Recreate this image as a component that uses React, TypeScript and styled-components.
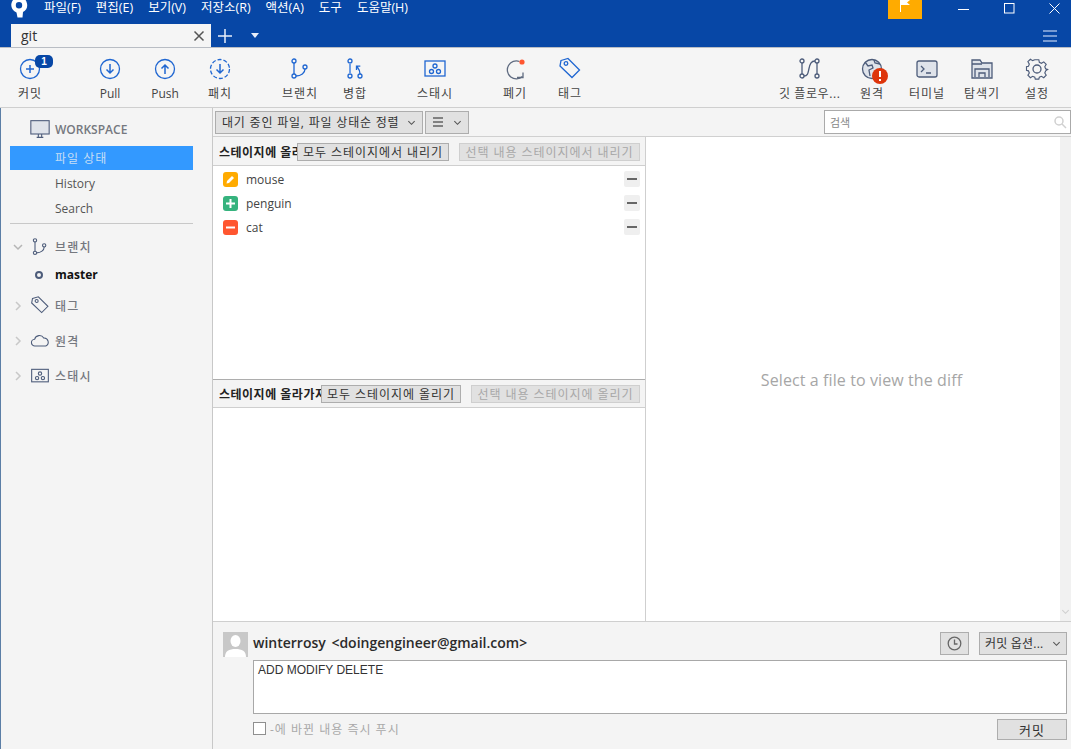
import React from "react";
import styled, { createGlobalStyle } from "styled-components";

const FONT = `"Open Sans", "Noto Sans CJK KR", "Noto Sans", sans-serif`;
const BLUE = "#1f66d1";
const SLATE = "#4d5c7a";

const Global = createGlobalStyle`
  html, body { margin: 0; padding: 0; height: 100%; overflow: hidden; background: #f4f4f4; }
  * { box-sizing: border-box; }
  #root { height: 100%; }
`;

const Page = styled.div`
  width: 1071px; height: 749px; display: flex; flex-direction: column;
  font-family: ${FONT}; font-size: 12px; color: #333; background: #f4f4f4; overflow: hidden;
`;
const TitleBar = styled.div`
  height: 24px; background: #0747a6; display: flex; align-items: flex-start; color: #fff;
`;
const Logo = styled.svg`width: 18px; height: 18px; margin-left: 10px; flex: none;`;
const Menu = styled.div`display: flex; gap: 15px; margin-left: 16px; height: 16px; align-items: center;`;
const MenuItem = styled.span`font-size: 12.5px; line-height: 16px; color: #fff; white-space: nowrap;`;
const Spacer = styled.div`flex: 1;`;
const Flag = styled.div`
  width: 34px; height: 19px; background: #ffab00; display: flex; justify-content: center; margin-right: 36px;
`;
const WinControls = styled.div`display: flex; gap: 34.5px; padding-right: 11px; height: 16px; align-items: center;`;
const TabRow = styled.div`
  height: 23px; background: #0747a6; display: flex; align-items: stretch; padding-left: 11px;
`;
const Tab = styled.div`
  width: 200px; background: #f5f5f5; display: flex; align-items: center; justify-content: space-between;
  padding: 0 6px 0 10px; font-size: 14px; color: #333;
`;
const TabAction = styled.div<{ $ml?: number; $mr?: number }>`
  width: 28px; display: flex; align-items: center; justify-content: center;
  margin-left: ${p => p.$ml ?? 0}px; margin-right: ${p => p.$mr ?? 0}px;
`;
const Toolbar = styled.div`
  height: 61px; background: #f5f5f5; border-top: 1px solid #b9bdc4; border-bottom: 1px solid #cfcfcf;
  display: flex; padding-left: 2.5px; padding-right: 6.5px;
`;
const ToolGroup = styled.div<{ $gap?: number }>`display: flex; margin-right: ${p => p.$gap ?? 25}px;`;
const ToolItem = styled.div<{ $w?: number }>`
  width: ${p => p.$w ?? 55}px; height: 59px; display: flex; flex-direction: column; align-items: center;
  position: relative; padding-top: 9px;
`;
const ToolIcon = styled.div`height: 24px; width: 24px; position: relative;`;
const ToolLabel = styled.div<{ $sp?: number }>`
  font-size: 12px; line-height: 16px; margin-top: 5px; color: #444; white-space: nowrap;
  letter-spacing: ${p => p.$sp ?? 1}px;
`;
const Badge = styled.span`
  position: absolute; left: 17px; top: -2px; width: 18px; height: 13px; background: #0747a6; border-radius: 5px;
  color: #fff; font-size: 10px; font-weight: 700; line-height: 13px; text-align: center; font-family: "Liberation Sans", sans-serif;
`;
const AlertDot = styled.svg`position: absolute; left: 12px; top: 11px; width: 16px; height: 16px;`;
const Body = styled.div`flex: 1; display: flex; min-height: 0;`;
const Sidebar = styled.aside`
  width: 213px; flex: none; border-left: 1px solid #5b7ea6; border-right: 1px solid #c8c8c8; background: #f4f4f4;
  padding: 11px 19px 0 9px; display: flex; flex-direction: column;
`;
const SideHead = styled.div<{ $h?: number }>`
  height: ${p => p.$h ?? 35}px; display: flex; align-items: center; color: #75787f; font-size: 12px; font-weight: 500;
  letter-spacing: 1.2px; flex: none;
`;
const WorkspaceHead = styled(SideHead)`letter-spacing: 0; font-weight: 600; padding-left: 20px;`;
const SideIconSlot = styled.div`width: 20px; margin: 0 5px 0 7px; display: flex; justify-content: center; flex: none;`;
const WorkspaceIcon = styled(SideIconSlot)`margin-left: 0;`;
const Chevron = styled.svg`width: 10px; height: 10px; flex: none; margin-left: 3px;`;
const SelectedRow = styled.div`
  height: 24px; margin: 7px 0 1px; background: #3399ff; color: #c7def5; padding-left: 45px; display: flex; align-items: center; flex: none; letter-spacing: 1px;
`;
const SideRow = styled.div<{ $bold?: boolean }>`
  height: 25px; padding-left: 45px; display: flex; align-items: center; flex: none; color: ${p => p.$bold ? "#111" : "#555"};
  font-weight: ${p => p.$bold ? 700 : 400};
`;
const MasterRow = styled(SideRow)`height: 21px; margin-bottom: 3px;`;
const SideDivider = styled.div`height: 1px; background: #c8c8c8; margin: 2px 0 5px; flex: none;`;
const MasterDot = styled.span`
  width: 8px; height: 8px; border: 2px solid ${SLATE}; border-radius: 50%; margin-left: -20px; margin-right: 12px;
`;
const Main = styled.main`flex: 1; min-width: 0; display: flex; flex-direction: column;`;
const FilterBar = styled.div`
  height: 29px; display: flex; align-items: center; padding-left: 2px; padding-right: 0; gap: 2px; flex: none;
  border-bottom: 1px solid #d0d0d0; background: #f4f4f4;
`;
const Select = styled.div<{ $w: number }>`
  width: ${p => p.$w}px; height: 23px; background: #e1e1e1; border: 1px solid #adadad; display: flex; align-items: center;
  justify-content: space-between; padding: 0 6px; font-size: 12px; letter-spacing: .8px; color: #333; white-space: nowrap; flex: none; overflow: hidden;
`;
const SearchBox = styled.div`
  width: 247px; height: 24px; margin-left: auto; background: #fff; border: 1px solid #aaa; display: flex; align-items: center;
  justify-content: space-between; padding: 0 3px 0 5px; color: #888; font-size: 11px;
`;
const Panes = styled.div`flex: 1; display: flex; min-height: 0;`;
const LeftPane = styled.div`width: 433px; flex: none; display: flex; flex-direction: column; border-right: 1px solid #cfcfcf;`;
const DiffPane = styled.div`flex: 1; background: #fff; display: flex; min-width: 0;`;
const DiffMsg = styled.div`
  flex: 1; display: flex; align-items: center; justify-content: center; color: #a6a6a6; font-size: 16px; letter-spacing: .1px; padding: 2px 0 0 17px;
`;
const Scroll = styled.div`
  width: 11px; background: #f1f1f1; display: flex; align-items: flex-end; justify-content: center; padding-bottom: 5px;
`;
const StageHead = styled.div<{ $top?: boolean }>`
  height: 29px; flex: none; background: #f4f4f4; border-bottom: 1px solid #cfcfcf;
  ${p => p.$top ? "border-top: 1px solid #adadad;" : ""}
  display: flex; align-items: center; padding: 1px 5px 0 6px; position: relative;
`;
const StageLabel = styled.div<{ $w: number }>`
  width: ${p => p.$w}px; flex: none; overflow: hidden; white-space: nowrap; font-weight: 700; font-size: 12px; color: #222; letter-spacing: .5px;
`;
const StageBtn = styled.div<{ $w: number; $off?: boolean }>`
  width: ${p => p.$w}px; height: 18px; flex: none; border: 1px solid ${p => p.$off ? "#cfcfcf" : "#adadad"}; background: #e1e1e1;
  color: ${p => p.$off ? "#a8a8a8" : "#333"}; display: flex; align-items: center; justify-content: center; white-space: nowrap;
  font-size: 12px; letter-spacing: .95px; margin-right: 10px; overflow: hidden; &:last-child { margin-right: 0; }
`;
const FileList = styled.div`flex: 1; background: #fff; padding-top: 1px; min-height: 0;`;
const FileRow = styled.div`height: 24px; display: flex; align-items: center; padding: 0 5px 0 10px;`;
const FileBadge = styled.div<{ $c: string }>`
  width: 15px; height: 15px; border-radius: 3px; background: ${p => p.$c}; display: flex; align-items: center; justify-content: center; flex: none;
`;
const FileName = styled.span`margin-left: 8px; flex: 1; color: #444;`;
const Unstage = styled.div`
  width: 16px; height: 16px; background: #efefef; border-radius: 2px; display: flex; align-items: center; justify-content: center;
  &::after { content: ""; width: 10px; height: 2px; background: #666; }
`;
const CommitArea = styled.div`
  height: 128px; flex: none; border-top: 1px solid #cfcfcf; background: #f4f4f4; padding: 10px 4px 0 10px; display: flex; flex-direction: column;
`;
const CommitTop = styled.div`height: 25px; display: flex; align-items: center; flex: none;`;
const Avatar = styled.svg`width: 25px; height: 25px; flex: none; margin-right: 5px;`;
const Author = styled.div`font-size: 14px; font-weight: 600; color: #2b2b2b; flex: 1; white-space: nowrap; margin-top: -4px; word-spacing: 2px;`;
const ClockBtn = styled.div`
  width: 29px; height: 23px; background: #e1e1e1; border: 1px solid #adadad; display: flex; align-items: center; justify-content: center; margin: -3px 10px 0 0;
`;
const OptBtn = styled(Select)`margin-top: -3px; padding: 0 5px; letter-spacing: .2px;`;
const Message = styled.div`
  height: 54px; margin: 3px 0 0 30px; background: #fff; border: 1px solid #a8a8a8; padding: 2px 4px;
  font-family: "Liberation Sans", sans-serif; font-size: 12px; color: #333; flex: none;
`;
const CommitBottom = styled.div`display: flex; align-items: center; justify-content: space-between; margin: 5px 0 0 30px; height: 21px;`;
const Check = styled.label`display: flex; align-items: center; color: #a9a9a9; font-size: 12px; letter-spacing: 1px; gap: 4px; margin-top: -2px;`;
const CheckBox = styled.span`width: 13px; height: 13px; background: #fff; border: 1px solid #8f8f8f; display: inline-block;`;
const CommitBtn = styled.div`
  width: 70px; height: 21px; background: #e1e1e1; border: 1px solid #adadad; display: flex; align-items: center; justify-content: center; font-size: 13px; letter-spacing: 1px; color: #333;
`;
const IconSvg = styled.svg`display: block;`;

const Ic: React.FC<{ c?: string; s?: number; children: React.ReactNode }> = ({ c = BLUE, s = 24, children }) => (
  <IconSvg width={s} height={s} viewBox="0 0 24 24" fill="none" stroke={c} strokeWidth={1.3}>{children}</IconSvg>
);
const BranchPaths = () => (<><circle cx="6" cy="4" r="2" /><circle cx="6" cy="19" r="2" /><circle cx="17" cy="10" r="2" /><path d="M6 6v11M8 19c5 0 9-3 9-7" /></>);
const TagPaths = () => (<><path d="M3 3.500 10 1.500l11.500 11.500-7.500 7.500L2 9z" /><circle cx="8" cy="6.500" r="1.800" /></>);
const StashPaths = () => (<><rect x="2" y="4" width="20" height="15" /><circle cx="12" cy="9" r="2" /><circle cx="8.500" cy="14.500" r="2" /><circle cx="15.500" cy="14.500" r="2" /></>);
const ChevD = ({ c = "#555", s = 9 }) => (<svg width={s} height={s} viewBox="0 0 10 10" fill="none" stroke={c} strokeWidth={1.2}><path d="M1.500 3.500 5 7l3.500-3.500" /></svg>);
const ChevR = () => (<Chevron viewBox="0 0 10 10" fill="none" stroke="#c8c8c8" strokeWidth="1.500"><path d="M3 1l4 4-4 4" /></Chevron>);

const Arrow = ({ up }: { up?: boolean }) => up
  ? <path d="M12 17V8M8.500 11.500 12 8l3.500 3.500" strokeWidth={1.5} />
  : <path d="M12 7v9M8.500 12.500 12 16l3.500-3.500" strokeWidth={1.5} />;

export default function App() {
  return (
    <Page>
      <Global />
      <TitleBar>
        <Logo viewBox="0 0 18 18">
          <path fill="#fff" fillRule="evenodd" d="M9-3a8 8 0 0 1 4 15l-.5 5.500h-5l-1-5A8 8 0 0 1 9-3zm0 5a3.200 3.200 0 1 0 0 6.400 3.200 3.200 0 0 0 0-6.400z" />
        </Logo>
        <Menu>
          {["파일(F)", "편집(E)", "보기(V)", "저장소(R)", "액션(A)", "도구", "도움말(H)"].map(m => <MenuItem key={m}>{m}</MenuItem>)}
        </Menu>
        <Spacer />
        <Flag>
          <svg width="12" height="12" viewBox="0 0 12 12"><path d="M1.500 0v12" stroke="#fff" strokeWidth="1" /><path d="M2 0h9L8 2.500 11 5H2z" fill="#fff" /></svg>
        </Flag>
        <WinControls>
          <svg width="11" height="11"><path d="M0 6.500h11" stroke="#fff" /></svg>
          <svg width="11" height="11"><rect x=".5" y=".5" width="9.500" height="9.500" fill="none" stroke="#fff" /></svg>
          <svg width="11" height="11"><path d="M.5.500l10 10M10.500.500l-10 10" stroke="#fff" /></svg>
        </WinControls>
      </TitleBar>
      <TabRow>
        <Tab>
          git
          <svg width="12" height="12"><path d="M1.500 1.500l9 9M10.500 1.500l-9 9" stroke="#555" strokeWidth="1.500" /></svg>
        </Tab>
        <TabAction><svg width="14" height="14"><path d="M7 0v14M0 7h14" stroke="#e8eefa" strokeWidth="1.500" /></svg></TabAction>
        <TabAction $ml={2}><svg width="8" height="5"><path d="M0 0h8L4 5z" fill="#e8eefa" /></svg></TabAction>
        <Spacer />
        <TabAction $mr={7}><svg width="14" height="12"><path d="M0 1h14M0 6h14M0 11h14" stroke="#9db8e2" strokeWidth="1.500" /></svg></TabAction>
      </TabRow>
      <Toolbar>
        <ToolGroup>
          <ToolItem>
            <ToolIcon><Ic><circle cx="12" cy="12" r="9.500" /><path d="M12 8v8M8 12h8" strokeWidth="1.500" /></Ic><Badge>1</Badge></ToolIcon>
            <ToolLabel>커밋</ToolLabel>
          </ToolItem>
        </ToolGroup>
        <ToolGroup>
          <ToolItem><ToolIcon><Ic><circle cx="12" cy="12" r="9.500" /><Arrow /></Ic></ToolIcon><ToolLabel $sp={0}>Pull</ToolLabel></ToolItem>
          <ToolItem><ToolIcon><Ic><circle cx="12" cy="12" r="9.500" /><Arrow up /></Ic></ToolIcon><ToolLabel $sp={0}>Push</ToolLabel></ToolItem>
          <ToolItem><ToolIcon><Ic><circle cx="12" cy="12" r="9.500" strokeDasharray="4 2" /><Arrow /></Ic></ToolIcon><ToolLabel>패치</ToolLabel></ToolItem>
        </ToolGroup>
        <ToolGroup>
          <ToolItem><ToolIcon><Ic><BranchPaths /></Ic></ToolIcon><ToolLabel>브랜치</ToolLabel></ToolItem>
          <ToolItem><ToolIcon><Ic><circle cx="7" cy="4" r="2" /><circle cx="7" cy="19" r="2" /><circle cx="17" cy="19" r="2" /><path d="M7 6v11" stroke="#6f9fe6" strokeWidth="2" /><path d="M17 17c0-3-1-5-3-7.500M13.500 13V9.200h3.800" /></Ic></ToolIcon><ToolLabel>병합</ToolLabel></ToolItem>
        </ToolGroup>
        <ToolGroup>
          <ToolItem><ToolIcon><Ic><StashPaths /></Ic></ToolIcon><ToolLabel>스태시</ToolLabel></ToolItem>
        </ToolGroup>
        <ToolGroup>
          <ToolItem>
            <ToolIcon>
              <Ic c="#5f6b80"><path d="M16.500 4.500A9 9 0 1 0 19.500 19.500" /><path d="M14 20.500h6v-5" /><circle cx="19" cy="5" r="2.600" fill="#ff5630" stroke="none" /></Ic>
            </ToolIcon>
            <ToolLabel>폐기</ToolLabel>
          </ToolItem>
          <ToolItem><ToolIcon><Ic><TagPaths /></Ic></ToolIcon><ToolLabel>태그</ToolLabel></ToolItem>
        </ToolGroup>
        <Spacer />
        <ToolGroup $gap={0}>
          <ToolItem $w={69.5}>
            <ToolIcon><Ic c={SLATE}><circle cx="4" cy="4" r="2" /><circle cx="4" cy="19" r="2" /><circle cx="19" cy="4" r="2" /><circle cx="19" cy="19" r="2" /><path d="M4 6v11M19 6v11M6 19c4 0 4-3 5-7.500S13 4 17 4" /></Ic></ToolIcon>
            <ToolLabel $sp={0.6}>깃 플로우...</ToolLabel>
          </ToolItem>
          <ToolItem>
            <ToolIcon>
              <Ic c={SLATE}><circle cx="12" cy="12" r="9.500" fill="#dfe3ea" /><path d="M5 5l3 4 4-1 1 3-4 2 1 6M14 3l1 3 5 1M16 13l2 2 3-1" /></Ic>
              <AlertDot viewBox="0 0 16 16"><circle cx="8" cy="8" r="8" fill="#de350b" /><path d="M8 3v6M8 11v2" stroke="#fff" strokeWidth="2" /></AlertDot>
            </ToolIcon>
            <ToolLabel>원격</ToolLabel>
          </ToolItem>
          <ToolItem><ToolIcon><Ic c={SLATE}><rect x="2" y="4" width="20" height="16" rx="2" fill="#dfe3ea" /><path d="M6 9l3 3-3 3M11 16h5" /></Ic></ToolIcon><ToolLabel>터미널</ToolLabel></ToolItem>
          <ToolItem><ToolIcon><Ic c={SLATE}><path d="M2 3h8l2 3h10v15H2z" fill="#dfe3ea" /><path d="M5 20v-8h14v8M9 20v-4h6v4M2 7h10" /></Ic></ToolIcon><ToolLabel>탐색기</ToolLabel></ToolItem>
          <ToolItem><ToolIcon><Ic c={SLATE}><path d="M10 2h4l.6 3 2.400 1 2.600-1.600 2.800 2.800L20.800 10l1 2.400 2.200.6v0l-.000 0-2.200 1.600-1 2.400 1.600 2.600-2.800 2.800L17 20.800l-2.400 1-.6 2.200h-4l-.6-2.200-2.400-1-2.600 1.600-2.800-2.800L3.200 17l-1-2.400L0 14v-4l2.200-.6 1-2.400L1.600 4.200 4.400 1.400 7 3l2.400-1z" transform="translate(1.500 1) scale(.88)" /><circle cx="12" cy="12" r="4" /></Ic></ToolIcon><ToolLabel>설정</ToolLabel></ToolItem>
        </ToolGroup>
      </Toolbar>
      <Body>
        <Sidebar>
          <WorkspaceHead $h={20}>
            <WorkspaceIcon><Ic c={SLATE} s={20}><rect x="1" y="2" width="22" height="16" fill="#dfe3ea" /><path d="M8 22h8M10 18v4M14 18v4" /></Ic></WorkspaceIcon>
            WORKSPACE
          </WorkspaceHead>
          <SelectedRow>파일 상태</SelectedRow>
          <SideRow>History</SideRow>
          <SideRow>Search</SideRow>
          <SideDivider />
          <SideHead>
            <Chevron viewBox="0 0 10 10" fill="none" stroke="#b5b5b5" strokeWidth="1.500"><path d="M1 3l4 4 4-4" /></Chevron>
            <SideIconSlot><Ic c={SLATE} s={20}><BranchPaths /></Ic></SideIconSlot>
            브랜치
          </SideHead>
          <MasterRow $bold><MasterDot />master</MasterRow>
          <SideHead>
            <ChevR />
            <SideIconSlot><Ic c={SLATE} s={21}><TagPaths /></Ic></SideIconSlot>
            태그
          </SideHead>
          <SideHead>
            <ChevR />
            <SideIconSlot><Ic c={SLATE} s={20}><path d="M6 18a4 4 0 0 1-.5-8 6 6 0 0 1 11-1.500A5 5 0 0 1 19 18z" /></Ic></SideIconSlot>
            원격
          </SideHead>
          <SideHead>
            <ChevR />
            <SideIconSlot><Ic c={SLATE} s={20}><StashPaths /></Ic></SideIconSlot>
            스태시
          </SideHead>
        </Sidebar>
        <Main>
          <FilterBar>
            <Select $w={208}>대기 중인 파일, 파일 상태순 정렬 <ChevD /></Select>
            <Select $w={44}>
              <svg width="12" height="10"><path d="M1 1h10M1 5h10M1 9h10" stroke="#222" /></svg>
              <ChevD />
            </Select>
            <SearchBox>
              검색
              <svg width="14" height="14" viewBox="0 0 14 14" fill="none" stroke="#d0d0d0" strokeWidth="1.500"><circle cx="6" cy="6" r="4" /><path d="M9 9l4 4" /></svg>
            </SearchBox>
          </FilterBar>
          <Panes>
            <LeftPane>
              <StageHead>
                <StageLabel $w={78}>스테이지에 올라가지 않은 파일</StageLabel>
                <StageBtn $w={152}>모두 스테이지에서 내리기</StageBtn>
                <StageBtn $w={181} $off>선택 내용 스테이지에서 내리기</StageBtn>
              </StageHead>
              <FileList>
                <FileRow>
                  <FileBadge $c="#ffab00"><svg width="11" height="11" viewBox="0 0 11 11"><path d="M1.500 9.500 2 7l5-5 2 2-5 5z" fill="#fff" /></svg></FileBadge>
                  <FileName>mouse</FileName><Unstage />
                </FileRow>
                <FileRow>
                  <FileBadge $c="#36b37e"><svg width="11" height="11"><path d="M5.500 1v9M1 5.500h9" stroke="#fff" strokeWidth="2" /></svg></FileBadge>
                  <FileName>penguin</FileName><Unstage />
                </FileRow>
                <FileRow>
                  <FileBadge $c="#ff5630"><svg width="11" height="11"><path d="M1 5.500h9" stroke="#fff" strokeWidth="2" /></svg></FileBadge>
                  <FileName>cat</FileName><Unstage />
                </FileRow>
              </FileList>
              <StageHead $top>
                <StageLabel $w={102}>스테이지에 올라가지 않은 파일</StageLabel>
                <StageBtn $w={140}>모두 스테이지에 올리기</StageBtn>
                <StageBtn $w={169} $off>선택 내용 스테이지에 올리기</StageBtn>
              </StageHead>
              <FileList />
            </LeftPane>
            <DiffPane>
              <DiffMsg>Select a file to view the diff</DiffMsg>
              <Scroll><ChevD c="#cfcfcf" /></Scroll>
            </DiffPane>
          </Panes>
          <CommitArea>
            <CommitTop>
              <Avatar viewBox="0 0 25 25">
                <rect width="25" height="25" fill="#c8c8c8" />
                <ellipse cx="12.500" cy="9" rx="5" ry="6" fill="#fff" />
                <path d="M2 25c0-6 4-8 10.500-8S23 19 23 25z" fill="#fff" />
              </Avatar>
              <Author>winterrosy &lt;doingengineer@gmail.com&gt;</Author>
              <ClockBtn>
                <svg width="15" height="15" viewBox="0 0 15 15" fill="none" stroke="#666" strokeWidth="1.300"><circle cx="7.500" cy="7.500" r="6.300" /><path d="M7.500 3.500v4.500h3" /></svg>
              </ClockBtn>
              <OptBtn $w={88}>커밋 옵션... <ChevD /></OptBtn>
            </CommitTop>
            <Message>ADD MODIFY DELETE</Message>
            <CommitBottom>
              <Check><CheckBox />-에 바뀐 내용 즉시 푸시</Check>
              <CommitBtn>커밋</CommitBtn>
            </CommitBottom>
          </CommitArea>
        </Main>
      </Body>
    </Page>
  );
}
